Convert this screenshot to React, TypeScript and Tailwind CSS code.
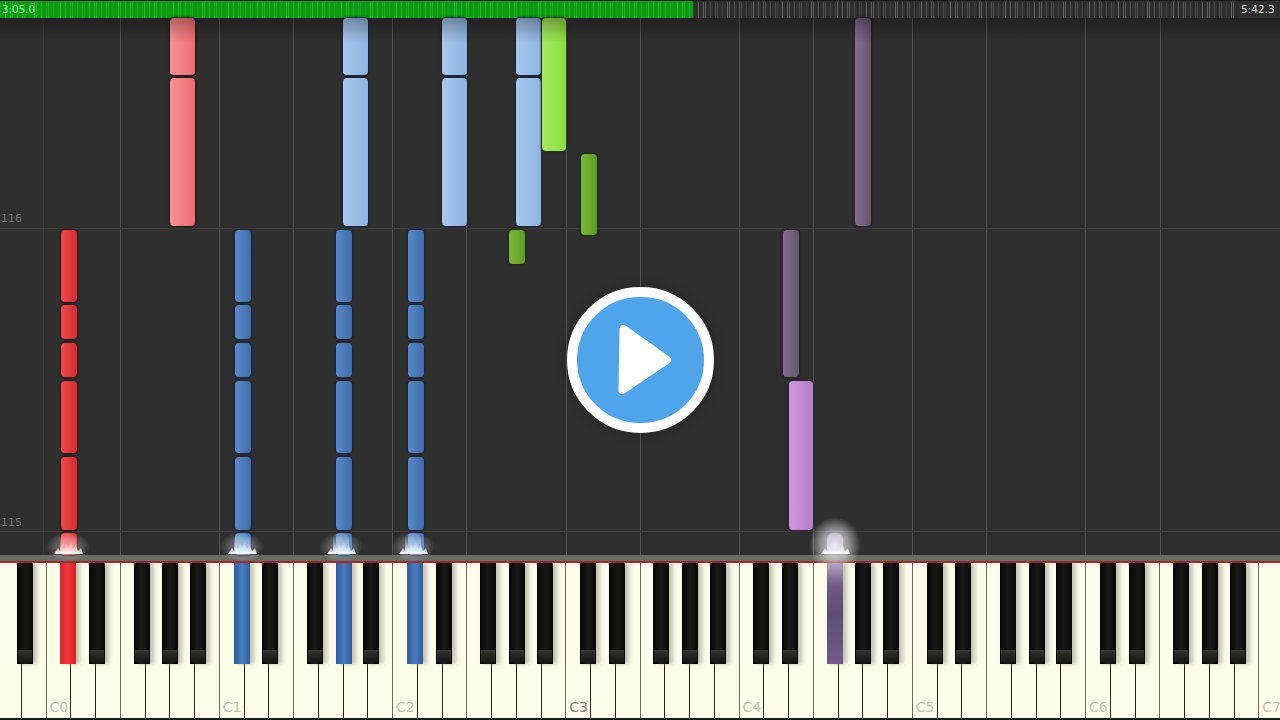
const tones = {
  lightRed: { from: '#f99393', to: '#ec6c72', edge: '#2a1416' },
  red: { from: '#f04a4c', to: '#d42c30', edge: '#2e1212' },
  lightBlue: { from: '#a9c7ec', to: '#8db4e0', edge: '#14233a' },
  blue: { from: '#5b8ac8', to: '#3f6caa', edge: '#16243c' },
  lightGreen: { from: '#a6ea5e', to: '#8cdc44', edge: '#223216' },
  green: { from: '#7cb83a', to: '#5f9a22', edge: '#202c16' },
  dimPurple: { from: '#85708f', to: '#655570', edge: '#231e27' },
  purple: { from: '#cd98dc', to: '#b47ec8', edge: '#2c2132' },
}

type Tone = keyof typeof tones

const note = (x: number, w: number, y: number, h: number, tone: Tone) => ({ x, w, y, h, ...tones[tone] })

// the same rhythm runs in the left hand columns
const leftHand = (x: number, tone: Tone) => [
  note(x, 16, 212, 72, tone),
  note(x, 16, 287, 34, tone),
  note(x, 16, 325, 34, tone),
  note(x, 16, 363, 72, tone),
  note(x, 16, 439, 73, tone),
  note(x, 16, 515, 22, tone),
]

const notes = [
  note(170, 25, 0, 57, 'lightRed'),
  note(170, 25, 60, 148, 'lightRed'),
  note(343, 25, 0, 57, 'lightBlue'),
  note(343, 25, 60, 148, 'lightBlue'),
  note(442, 25, 0, 57, 'lightBlue'),
  note(442, 25, 60, 148, 'lightBlue'),
  note(516, 25, 0, 57, 'lightBlue'),
  note(516, 25, 60, 148, 'lightBlue'),
  note(542, 24, 0, 133, 'lightGreen'),
  note(581, 16, 136, 81, 'green'),
  note(509, 16, 212, 34, 'green'),
  note(855, 16, 0, 208, 'dimPurple'),
  note(783, 16, 212, 147, 'dimPurple'),
  note(789, 24, 363, 149, 'purple'),
  ...leftHand(61, 'red'),
  ...leftHand(235, 'blue'),
  ...leftHand(336, 'blue'),
  ...leftHand(408, 'blue'),
]

const labels: Record<number, string> = { 2: 'C0', 9: 'C1', 16: 'C2', 23: 'C3', 30: 'C4', 37: 'C5', 44: 'C6', 51: 'C7' }

// black key hanging off the right side of each white key, by note in the octave (A = 0)
const blackPos: Record<number, string> = {
  0: 'right-[-12px]',
  2: 'right-[-6px]',
  3: 'right-[-10px]',
  5: 'right-[-5px]',
  6: 'right-[-9px]',
}

const litKeys: Record<number, string> = {
  2: 'linear-gradient(90deg,#d8262a,#f0383a 50%,#d42226)',
  9: 'linear-gradient(90deg,#2f5c9c,#4a7cc0 50%,#2f5c9c)',
  13: 'linear-gradient(90deg,#2f5c9c,#4a7cc0 50%,#2f5c9c)',
  16: 'linear-gradient(90deg,#2f5c9c,#4a7cc0 50%,#2f5c9c)',
  33: 'linear-gradient(180deg,#b4a6c4,#6d5a86 22%,#5f4d78 50%,#6f5b8a 100%)',
}

const ticks = Array.from({ length: 320 }, (_, i) => ({
  x: i * 4 + ((i * 7) % 3),
  o: 0.25 + ((i * 13) % 7) * 0.07,
}))

function Ticks({ color }: { color: string }) {
  return (
    <svg className="absolute inset-0" width="100%" height="100%">
      {ticks.map((t) => (
        <line key={t.x} x1={t.x + 0.5} x2={t.x + 0.5} y1="1" y2="17" stroke={color} strokeOpacity={t.o} />
      ))}
    </svg>
  )
}

function Sparkle({ x, tint, glow = 0.4 }: { x: number; tint: string; glow?: number }) {
  const big = glow > 0.5
  return (
    <svg className="absolute bottom-[-20px] pointer-events-none" style={{ left: x - 40 }} width="80" height="70" viewBox="0 0 80 70">
      <defs>
        <radialGradient id={`glow${x}`}>
          <stop offset="0%" stopColor="#ffffff" stopOpacity={glow} />
          <stop offset="55%" stopColor="#ffffff" stopOpacity={glow * 0.55} />
          <stop offset="100%" stopColor="#ffffff" stopOpacity="0" />
        </radialGradient>
        <linearGradient id={`fade${x}`} x1="0" y1="0" x2="0" y2="1">
          <stop offset="0%" stopColor={tint} stopOpacity={big ? 0.75 : 0.1} />
          <stop offset="100%" stopColor="#ffffff" stopOpacity="0.55" />
        </linearGradient>
        <linearGradient id={`spike${x}`} x1="0" y1="0" x2="0" y2="1">
          <stop offset="0%" stopColor={tint} stopOpacity="0.15" />
          <stop offset="100%" stopColor="#ffffff" stopOpacity="1" />
        </linearGradient>
      </defs>
      <ellipse cx="40" cy={big ? 40 : 42} rx={big ? 26 : 22} ry={big ? 28 : 15} fill={`url(#glow${x})`} />
      <rect x="32" y="28" width="16" height="21" rx="6" fill={`url(#fade${x})`} className="blur-[0.5px]" />
      <polygon
        points="26,49 30,43 32,46 33,36 36,44 38,38 40,43 43,36 45,44 48,40 50,46 53,43 55,49"
        fill={`url(#spike${x})`}
        className="blur-[0.5px]"
      />
    </svg>
  )
}

export default function App() {
  return (
    <div className="w-[1280px] h-[720px] flex flex-col overflow-hidden relative bg-[#2f2f2f] font-['DejaVu_Sans',sans-serif]">
      {/* progress bar */}
      <div className="h-[18px] shrink-0 flex bg-[#2e2e2e] border-t border-[#161616]">
        <div className="w-[693px] relative flex items-center pl-[2px] pb-px bg-[#0a9a12] overflow-hidden">
          <Ticks color="#38c03c" />
          <span className="relative text-[10.3px] leading-[12px] text-[#a8f0a0]">3:05.0</span>
        </div>
        <div className="flex-1 relative overflow-hidden">
          <Ticks color="#7c7c7c" />
        </div>
        <div className="w-[43px] flex items-center bg-[#2e2e2e] pl-[4px] pb-px">
          <span className="text-[10.5px] leading-[12px] text-[#d8d8d8]">5:42.3</span>
        </div>
      </div>

      {/* falling notes */}
      <div className="flex-1 relative bg-[#2f2f2f]">
        <div className="absolute inset-0 grid grid-cols-[43px_77px_99px_74px_99px_74px_100px_74px_99px_74px_99px_74px_99px_75px_1fr]">
          <div />
          <div className="border-l border-[#383838]" />
          {Array.from({ length: 13 }, (_, i) => (
            <div key={i} className="border-l border-[#565656]" />
          ))}
        </div>
        <div className="absolute inset-0 flex flex-col">
          <div className="h-[211px] flex items-end pl-px pb-[3px] border-b border-[#3d3d3d]">
            <span className="text-[11px] leading-[13px] text-[#767676]">116</span>
          </div>
          <div className="h-[303px] flex items-end pl-px pb-[2px] border-b border-[#3d3d3d]">
            <span className="text-[11px] leading-[13px] text-[#767676]">115</span>
          </div>
        </div>
        {notes.map((n) => (
          <div
            key={`${n.x}-${n.y}`}
            className="absolute rounded-[4px]"
            style={{
              left: n.x,
              top: n.y,
              width: n.w,
              height: n.h,
              background: `linear-gradient(90deg, ${n.from}, ${n.to})`,
              boxShadow: `0 0 2px 1px ${n.edge}`,
            }}
          />
        ))}
        <div className="absolute inset-x-0 top-0 h-[24px] bg-linear-to-b from-black/30 to-transparent" />
        <Sparkle x={68} tint="#f6a0a0" />
        <Sparkle x={242} tint="#bcd8f8" />
        <Sparkle x={341} tint="#bcd8f8" />
        <Sparkle x={413} tint="#bcd8f8" />
        <Sparkle x={835} tint="#d8c6e4" glow={0.85} />
      </div>

      {/* separator */}
      <div className="h-[6px] shrink-0 bg-[#6a6a66]" />
      <div className="h-[2px] shrink-0 bg-[#9a2a30]" />

      {/* keyboard */}
      <div className="h-[157px] shrink-0 relative overflow-hidden bg-[#1a1a14]">
        <div className="flex h-[155px] ml-[-3px]">
          {Array.from({ length: 52 }, (_, i) => {
            const n = i % 7
            const full = n === 1 || n === 4
            return (
              <div
                key={i}
                className={`w-[24.76px] shrink-0 relative h-full bg-[#fdfbe9] border-r ${full ? 'border-[#6b6b58]' : 'border-[#26261f]'}`}
              >
                {labels[i] && (
                  <span className={`absolute left-[3px] bottom-[3px] text-[14px] leading-[16px] ${i === 23 ? 'text-[#7d7d72]' : 'text-[#c4c2b4]'}`}>
                    {labels[i]}
                  </span>
                )}
                {blackPos[n] && i < 51 && (
                  <div
                    className={`absolute z-10 top-0 ${blackPos[n]} w-4 h-[101px] flex flex-col justify-end shadow-[4px_0_4px_rgba(95,95,80,0.35)]`}
                    style={{ background: litKeys[i] ?? 'linear-gradient(90deg,#060606,#181816 50%,#080808)' }}
                  >
                    <div className={`h-[12px] mx-px mb-[2px] ${litKeys[i] ? '' : 'bg-linear-to-b from-[#36362f] to-[#161614]'}`} />
                  </div>
                )}
                {/* white lines stop at the foot of a black key */}
                {!full && <div className="absolute top-0 -right-px w-px h-[101px] bg-[#fdfbe9]" />}
              </div>
            )
          })}
        </div>
      </div>

      {/* play button overlay */}
      <div className="absolute inset-0 flex items-center justify-center">
        <div className="relative w-[147px] h-[146px] rounded-full bg-[#4fa4ea] border-[10px] border-white shadow-[0_0_12px_rgba(0,0,0,0.25)]">
          <svg width="127" height="126" viewBox="0 0 127 126">
            <path d="M46.5 32 L45.5 93 L90 63 Z" fill="#fff" stroke="#fff" strokeWidth="8" strokeLinejoin="round" />
          </svg>
        </div>
      </div>
    </div>
  )
}
